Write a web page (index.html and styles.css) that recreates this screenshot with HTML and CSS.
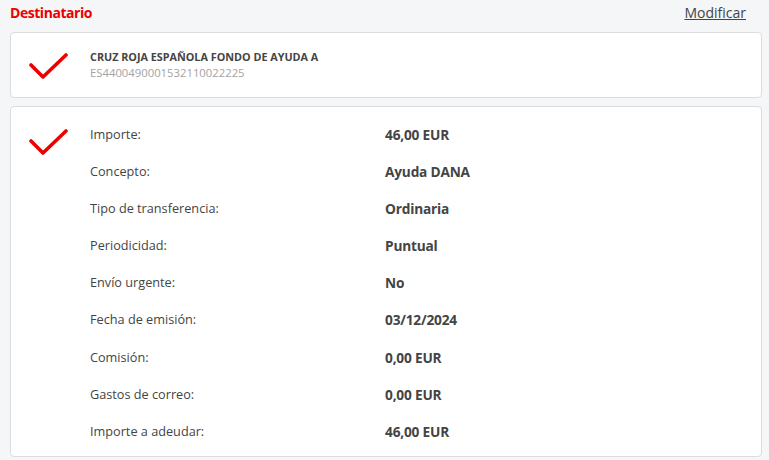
FILE: index.html
```html
<!DOCTYPE html>
<html lang="es">
<head>
<meta charset="utf-8">
<link rel="stylesheet" href="styles.css">
</head>
<body>
<div class="page">
  <div class="header">
    <h2 class="title">Destinatario</h2>
    <a class="edit" href="#">Modificar</a>
  </div>
  <div class="card card-dest">
    <svg class="check" width="40" height="28" viewBox="0 0 40 28"><path d="M3 13 L15 25 L38 3" fill="none" stroke="#ec0000" stroke-width="3.6" stroke-linecap="round" stroke-linejoin="round"/></svg>
    <div class="dest">
      <div class="dest-name">CRUZ ROJA ESPAÑOLA FONDO DE AYUDA A</div>
      <div class="dest-iban">ES4400490001532110022225</div>
    </div>
  </div>
  <div class="card card-detail">
    <svg class="check" width="40" height="28" viewBox="0 0 40 28"><path d="M3 13 L15 25 L38 3" fill="none" stroke="#ec0000" stroke-width="3.6" stroke-linecap="round" stroke-linejoin="round"/></svg>
    <dl class="rows">
      <div class="row"><dt>Importe:</dt><dd>46,00 EUR</dd></div>
      <div class="row"><dt>Concepto:</dt><dd>Ayuda DANA</dd></div>
      <div class="row"><dt>Tipo de transferencia:</dt><dd>Ordinaria</dd></div>
      <div class="row"><dt>Periodicidad:</dt><dd>Puntual</dd></div>
      <div class="row"><dt>Envío urgente:</dt><dd>No</dd></div>
      <div class="row"><dt>Fecha de emisión:</dt><dd>03/12/2024</dd></div>
      <div class="row"><dt>Comisión:</dt><dd>0,00 EUR</dd></div>
      <div class="row"><dt>Gastos de correo:</dt><dd>0,00 EUR</dd></div>
      <div class="row"><dt>Importe a adeudar:</dt><dd>46,00 EUR</dd></div>
    </dl>
  </div>
</div>
</body>
</html>
```
FILE: styles.css
```css
* { box-sizing: border-box; }
html, body { margin: 0; padding: 0; }
body {
  background: #f5f6f7;
  font-family: "Open Sans", "Noto Sans", sans-serif;
  color: #444;
  width: 769px;
  height: 460px;
  overflow: hidden;
}
.page {
  padding: 2px 7px 0 10px;
}
.header {
  display: flex;
  justify-content: space-between;
  align-items: center;
  height: 20px;
  margin-bottom: 10px;
}
.title {
  margin: 0;
  font-size: 14px;
  font-weight: 700;
  color: #ec0000;
  letter-spacing: -0.45px;
}
.edit {
  font-size: 14px;
  color: #444;
  text-decoration: underline;
  margin-right: 16px;
}
.card {
  background: #fff;
  border: 1px solid #dcdcdc;
  border-radius: 4px;
  display: flex;
}
.card-dest {
  height: 66px;
  align-items: center;
  padding-left: 17px;
  margin-bottom: 8px;
}
.check { flex: none; display: block; }
.card-dest .check { margin-top: 2px; }
.dest { margin-left: 22px; }
.dest-name {
  font-size: 10.8px;
  font-weight: 700;
  color: #444;
  line-height: 16px;
}
.dest-iban {
  font-size: 11.3px;
  color: #a3a3a3;
  line-height: 16px;
}
.card-detail {
  height: 351px;
  padding: 18px 0 0 17px;
  align-items: flex-start;
}
.card-detail .check { margin-top: 3px; }
.rows {
  margin: 0 0 0 22px;
  flex: 1;
}
.row {
  display: flex;
  height: 37.1px;
  font-size: 12.7px;
}
.row dt {
  width: 295px;
  color: #444;
}
.row dd {
  margin: 0;
  font-weight: 700;
  font-size: 13.7px;
  letter-spacing: -0.2px;
  color: #444;
}
```
